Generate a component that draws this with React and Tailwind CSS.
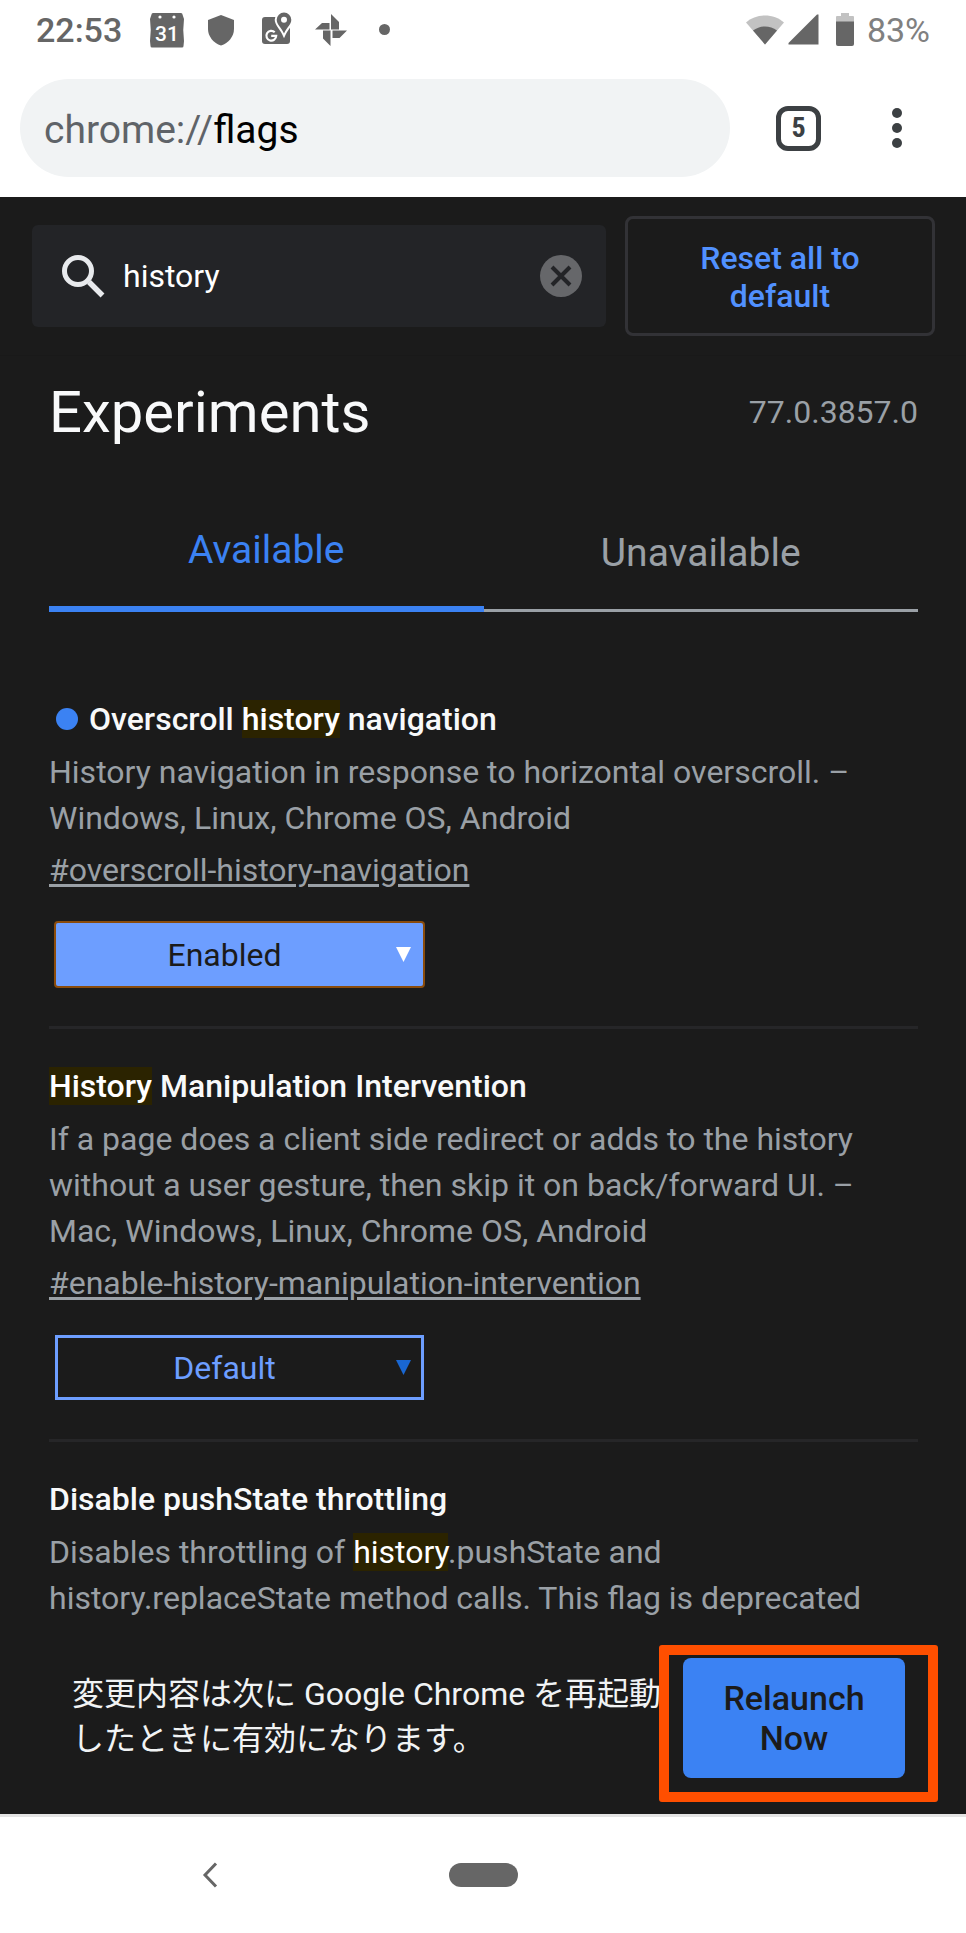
import { useState } from 'react';

function CalendarIcon() {
  return (
    <svg className="h-9 w-9" viewBox="0 0 36 36" aria-hidden="true">
      <path fill="#666" d="M4 1h28a1.500 1.500 0 0 1 1.500 1.500L35 7q-1.500 11 0 22l-.5 5a1.500 1.500 0 0 1-1.500 1.500H3A1.500 1.500 0 0 1 1.500 34L1 29q1.500-11 0-22l1.500-4.500A1.500 1.500 0 0 1 4 1z" />
      <circle cx="11" cy="5" r="1.600" fill="#fff" />
      <circle cx="25" cy="5" r="1.600" fill="#fff" />
      <text x="18" y="28.500" textAnchor="middle" fontSize="21" fontWeight="500" fill="#fff" fontFamily="Roboto, sans-serif">31</text>
    </svg>
  );
}

function ShieldIcon() {
  return (
    <svg className="h-8 w-8" viewBox="0 0 32 32" aria-hidden="true">
      <path fill="#666" d="M14 1 27 6v9c0 7.500-5.500 14-13 16.500C6.500 29 1 22.500 1 15V6z" />
    </svg>
  );
}

function MapsIcon() {
  return (
    <svg className="h-9 w-8" viewBox="0 0 32 36" aria-hidden="true">
      <rect x="1" y="5" width="28" height="27" rx="3" fill="#666" />
      <path
        fill="#666"
        stroke="#fff"
        strokeWidth="4"
        paintOrder="stroke"
        d="M23 .500a7.300 7.300 0 0 1 7.300 7.300c0 4.700-4.300 7.200-7.300 13.700-3-6.500-7.300-9-7.300-13.700A7.300 7.300 0 0 1 23 .500z"
      />
      <circle cx="23" cy="7.800" r="3" fill="#fff" />
      <path fill="none" stroke="#fff" strokeWidth="2.200" d="M13.700 20.200a4.900 4.900 0 1 0 1.500 3.600H10.200" />
    </svg>
  );
}

function PinwheelIcon() {
  return (
    <svg className="h-8 w-8" viewBox="0 0 32 32" aria-hidden="true">
      <path fill="#666" d="M16 0 24 8v7.500h-8zM32 16.500 24.500 24h-7v-7.500zM15.500 32 8 24.500v-8h7.500zM0 15.500 7 9h7.500v6.500z" />
    </svg>
  );
}

function StatusBar() {
  return (
    <div className="flex h-[59px] items-center pl-9 pr-9 text-[34px] font-medium leading-10 text-[#666]">
      <span>22:53</span>
      <div className="ml-[27px] flex items-center gap-[22px]">
        <CalendarIcon />
        <ShieldIcon />
        <MapsIcon />
        <PinwheelIcon />
      </div>
      <span className="ml-8 h-[11px] w-[11px] rounded-full bg-[#666]" />
      <div className="ml-auto flex items-center">
        <svg className="h-[30px] w-[38px]" viewBox="0 0 38 30" aria-hidden="true">
          <path fill="#c2c2c2" d="M19 29.500 0 7.500C10-2 28-2 38 7.500z" />
          <path fill="#666" d="M19 29.500 7 15.500c7-5.500 17-5.500 24 0z" />
        </svg>
        <svg className="ml-1 h-[31px] w-[31px]" viewBox="0 0 31 31" aria-hidden="true">
          <path fill="#666" d="M30.500.500v30H.500v-1.500L29 .500z" />
        </svg>
        <svg className="ml-4 h-[33px] w-5" viewBox="0 0 20 33" aria-hidden="true">
          <path fill="#c2c2c2" d="M6 0h8v3h4a1 1 0 0 1 1 1v6H1V4a1 1 0 0 1 1-1h4z" />
          <path fill="#666" d="M1 8.500h18V31a2 2 0 0 1-2 2H3a2 2 0 0 1-2-2z" />
        </svg>
        <span className="ml-3 font-normal text-[#808080]">83%</span>
      </div>
    </div>
  );
}

function Toolbar() {
  return (
    <div className="flex items-center pb-5 pl-5 pr-16 pt-5">
      <a href="chrome://flags" className="flex h-[98px] flex-1 items-center rounded-full bg-[#f1f3f4] pl-6 pt-1 text-[39px] leading-[46px] text-black">
        <span className="text-[#5f6368]">chrome://</span>flags
      </a>
      <button type="button" aria-label="5 open tabs" className="ml-[46px] flex h-[45px] w-[45px] items-center justify-center rounded-xl border-[5px] border-[#3c4043] text-[28px] font-bold leading-8 text-[#3c4043]" style={{ fontFamily: '"Roboto Condensed", Roboto, sans-serif' }}>
        5
      </button>
      <button type="button" aria-label="Menu" className="ml-[71px] flex flex-col gap-[5px]">
        <span className="h-2.5 w-2.5 rounded-full bg-[#3c4043]" />
        <span className="h-2.5 w-2.5 rounded-full bg-[#3c4043]" />
        <span className="h-2.5 w-2.5 rounded-full bg-[#3c4043]" />
      </button>
    </div>
  );
}

function SearchHeader() {
  const [query, setQuery] = useState('history');
  return (
    <div className="flex items-center gap-[19px] border-b border-[#191919] pb-[19px] pl-8 pr-[31px] pt-[19px]">
      <label className="flex h-[102px] min-w-0 flex-1 items-center rounded-md bg-[#232427] pl-[29px] pr-6">
        <svg className="h-11 w-11 shrink-0" viewBox="0 0 44 44" aria-hidden="true">
          <circle cx="17" cy="17" r="13.500" fill="none" stroke="#e8eaed" strokeWidth="5" />
          <path d="M28 28 41.500 41.500" stroke="#e8eaed" strokeWidth="5.500" />
        </svg>
        <input
          type="text"
          aria-label="Search flags"
          value={query}
          onChange={(e) => setQuery(e.target.value)}
          className="ml-[18px] min-w-0 flex-1 bg-transparent text-[32px] leading-[46px] text-white outline-none"
        />
        <button type="button" aria-label="Clear search" onClick={() => setQuery('')}>
          <svg className="h-[42px] w-[42px]" viewBox="0 0 42 42" aria-hidden="true">
            <circle cx="21" cy="21" r="21" fill="#66676a" />
            <path d="m12 12 18 18M30 12 12 30" stroke="#232427" strokeWidth="4" />
          </svg>
        </button>
      </label>
      <button type="button" className="h-[120px] w-[310px] rounded-lg border-[3px] border-[#323236] px-16 pt-0.5 text-[32px] font-medium leading-[38px] text-[#5191ff]">
        Reset all to default
      </button>
    </div>
  );
}

function Mark({ children }) {
  return <mark className="bg-[#2b2300] text-white">{children}</mark>;
}

function Flag({ title, children, link, value, modified }) {
  return (
    <section className="border-b-[3px] border-[#262628] pb-[38px] pt-[34px] last:border-b-0 last:pb-0">
      <h2 className="flex items-center text-[32px] font-medium leading-[46px] text-[#f8f9fa]">
        {modified && <span className="ml-[7px] mr-[11px] h-[22px] w-[22px] rounded-full bg-[#3b82f3]" />}
        <span>{title}</span>
      </h2>
      <p className="mt-[7px] text-[32px] leading-[46px] text-[#9aa0a6]">{children}</p>
      {link && (
        <a href={link} className="mt-1.5 block text-[32px] leading-[46px] text-[#9aa0a6] underline decoration-[3px] underline-offset-[3px]">
          {link}
        </a>
      )}
      {value && (
        <div className="relative mt-7 flex h-[67px] w-[381px] items-center px-[5px]">
          <select
            aria-label={link}
            defaultValue={value}
            className={
              modified
                ? 'h-[67px] w-full appearance-none rounded-[4px] border-2 border-[#8a4c0c] bg-[#6d9eff] pr-[30px] text-center text-[32px] leading-[46px] text-[#1b1b1b] [text-align-last:center]'
                : 'mx-px h-[65px] w-full appearance-none border-[3px] border-[#6d9eff] bg-transparent pr-[30px] text-center text-[32px] leading-[46px] text-[#6d9eff] [text-align-last:center]'
            }
          >
            <option>Default</option>
            <option>Enabled</option>
            <option>Disabled</option>
          </select>
          <svg className="pointer-events-none absolute right-[19px] top-[26px] h-[15px] w-[15px]" viewBox="0 0 15 15" aria-hidden="true">
            <path d="M0 0h15L7.500 15z" fill={modified ? '#fff' : '#1967d2'} />
          </svg>
        </div>
      )}
    </section>
  );
}

function Tabs() {
  return (
    <div role="tablist" className="mt-20 flex items-end text-[39px] leading-[48px]">
      <button type="button" role="tab" aria-selected="true" className="flex-1 border-b-[6px] border-[#3b82f3] pb-8 text-[#3b82f3]">
        Available
      </button>
      <button type="button" role="tab" aria-selected="false" className="flex-1 border-b-[3px] border-[#9aa0a6] pb-8 text-[#9aa0a6]">
        Unavailable
      </button>
    </div>
  );
}

function RelaunchBar() {
  return (
    <div className="mt-auto flex items-start justify-between pb-3 pl-[72px] pr-7 pt-6">
      <p className="-mr-1 min-w-0 flex-1 pt-[27px] text-[32px] leading-[45px] text-[#f1f3f4]">
        変更内容は次に Google Chrome を再起動したときに有効になります。
      </p>
      <div className="shrink-0 rounded-[3px] border-[10px] border-[#ff4f00] pb-[14px] pl-[14px] pr-[23px] pt-[3px]">
        <button type="button" className="block h-[120px] w-[222px] rounded-lg bg-[#3b82f3] px-8 text-[34px] font-medium leading-[40px] text-[#1b1b1b]">
          Relaunch Now
        </button>
      </div>
    </div>
  );
}

function NavigationBar() {
  return (
    <nav className="grid h-[119px] grid-cols-[1fr_69px_1fr] items-center border-t-[3px] border-[#e3e3e3] bg-white">
      <button type="button" aria-label="Back" className="mr-[231px] justify-self-end">
        <svg className="h-[26px] w-[16px]" viewBox="0 0 16 26" aria-hidden="true">
          <path d="M14 1.500 3 13l11 11.500" fill="none" stroke="#666" strokeWidth="3" />
        </svg>
      </button>
      <button type="button" aria-label="Home" className="h-6 rounded-full bg-[#666]" />
    </nav>
  );
}

export default function App() {
  return (
    <div
      className="flex min-h-screen flex-col bg-white"
      style={{ fontFamily: 'Roboto, "Noto Sans CJK JP", sans-serif' }}
    >
      <StatusBar />
      <Toolbar />
      <main className="flex flex-1 flex-col bg-[#1b1b1b]">
        <SearchHeader />
        <div className="pl-[49px] pr-12 pt-[22px]">
          <div className="flex items-center justify-between">
            <h1 className="text-[58px] leading-[68px] text-[#f8f9fa]">Experiments</h1>
            <span className="text-[32px] leading-[46px] text-[#9aa0a6]">77.0.3857.0</span>
          </div>
          <Tabs />
          <div className="mt-[50px]">
            <Flag
              modified
              title={<>Overscroll <Mark>history</Mark> navigation</>}
              link="#overscroll-history-navigation"
              value="Enabled"
            >
              History navigation in response to horizontal overscroll. – Windows, Linux, Chrome OS, Android
            </Flag>
            <Flag
              title={<><Mark>History</Mark> Manipulation Intervention</>}
              link="#enable-history-manipulation-intervention"
              value="Default"
            >
              If a page does a client side redirect or adds to the history without a user gesture, then skip it on back/forward UI. – Mac, Windows, Linux, Chrome OS, Android
            </Flag>
            <Flag title="Disable pushState throttling">
              Disables throttling of <Mark>history</Mark>.pushState and<br />
              history.replaceState method calls. This flag is deprecated
            </Flag>
          </div>
        </div>
        <RelaunchBar />
      </main>
      <NavigationBar />
    </div>
  );
}
